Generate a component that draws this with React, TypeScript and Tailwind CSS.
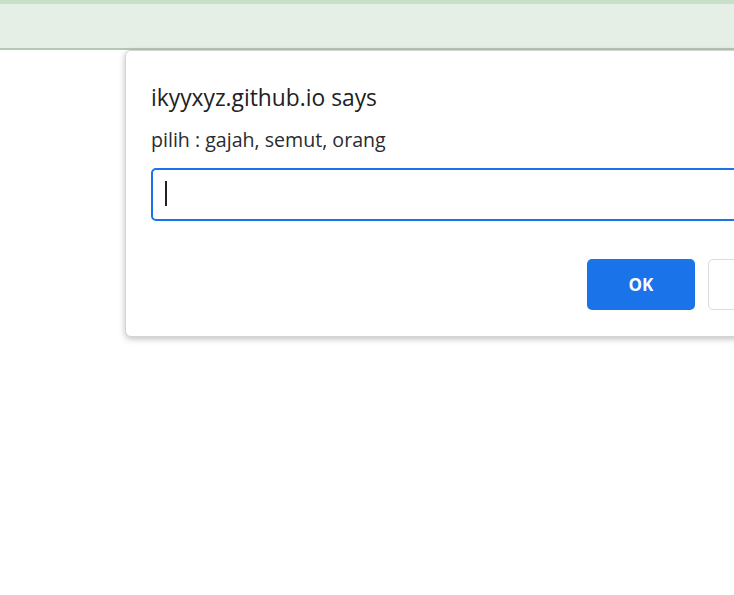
export default function App() {
  return (
    <div className="relative h-[595px] w-[734px] overflow-hidden bg-white font-['Open_Sans',sans-serif]">
      <div className="h-[50px] border-t-[4px] border-b-[2px] border-t-[#c8dfc8] border-b-[#b4c9b4] bg-[#e6efe6]" />

      <div className="absolute left-[125px] top-[50px] w-[720px] rounded-[6px] border border-[#d4d4d4] bg-white pl-[25px] pr-[24px] pt-[32px] pb-[26px] shadow-[0_2px_6px_rgba(0,0,0,0.25)]">
        <div className="text-[22.8px] leading-[30px] text-[#202124]">ikyyxyz.github.io says</div>
        <div className="mt-[15px] text-[19.6px] leading-[24px] text-[#2a2b2e]">pilih : gajah, semut, orang</div>

        <div className="mt-[16px] flex h-[53px] w-[620px] items-center rounded-[5px] border-2 border-[#1a73e8] pl-[12px]">
          <div className="mb-[2px] h-[25px] w-[2px] bg-[#202124]" />
        </div>

        <div className="mt-[38px] flex gap-[13px] pl-[436px]">
          <div className="flex h-[51px] w-[108px] items-center justify-center rounded-[5px] bg-[#1a73e8] text-[17px] font-bold text-white">
            OK
          </div>
          <div className="h-[51px] w-[108px] rounded-[5px] border border-[#dadce0] bg-white" />
        </div>
      </div>
    </div>
  )
}
